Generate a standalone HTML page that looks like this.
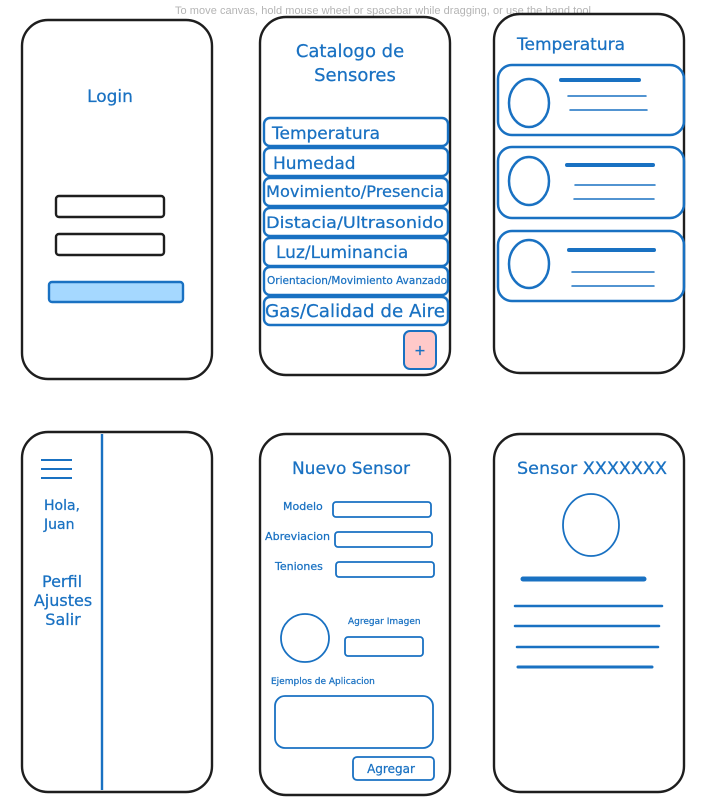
<!DOCTYPE html>
<html><head><meta charset="utf-8"><style>
html,body{margin:0;padding:0;background:#fff;width:714px;height:808px;overflow:hidden}
svg{display:block}
text{font-family:"DejaVu Sans","Liberation Sans",sans-serif;fill:#1971c2;stroke:#1971c2;stroke-width:0.25}
</style></head><body>
<svg width="714" height="808" viewBox="0 0 714 808" xmlns="http://www.w3.org/2000/svg">
<text x="383" y="14" text-anchor="middle" font-size="11" style="fill:#b4b4b4;stroke:none;font-family:'Liberation Sans',sans-serif" textLength="416">To move canvas, hold mouse wheel or spacebar while dragging, or use the hand tool</text>
<g fill="none" stroke="#1e1e1e" stroke-width="2.4">
<rect x="22" y="20" width="190" height="359" rx="26"/>
<rect x="260" y="17" width="190" height="358" rx="26"/>
<rect x="494" y="14" width="190" height="359" rx="26"/>
<rect x="22" y="432" width="190" height="360" rx="26"/>
<rect x="260" y="434" width="190" height="361" rx="26"/>
<rect x="494" y="434" width="190" height="358" rx="26"/>
<rect x="56" y="196" width="108" height="21" rx="3"/>
<rect x="56" y="234" width="108" height="21" rx="3"/>
</g>
<text x="110" y="102" text-anchor="middle" font-size="17">Login</text>
<rect x="49" y="282" width="134" height="20" rx="3" fill="#a5d8ff" stroke="#1971c2" stroke-width="2.4"/>
<text x="350" y="57" text-anchor="middle" font-size="18">Catalogo de</text>
<text x="355" y="81" text-anchor="middle" font-size="18">Sensores</text>
<g fill="none" stroke="#1971c2" stroke-width="2.4">
<rect x="264" y="118" width="184" height="28" rx="6"/>
<rect x="264" y="148" width="184" height="28" rx="6"/>
<rect x="264" y="178" width="184" height="28" rx="6"/>
<rect x="264" y="208" width="184" height="28" rx="6"/>
<rect x="264" y="238" width="184" height="28" rx="6"/>
<rect x="264" y="267" width="184" height="28" rx="6"/>
<rect x="264" y="297" width="184" height="28" rx="6"/>
</g>
<text x="272" y="139" font-size="17">Temperatura</text>
<text x="273" y="169" font-size="17">Humedad</text>
<text x="266" y="197" font-size="16" textLength="178" lengthAdjust="spacingAndGlyphs">Movimiento/Presencia</text>
<text x="266" y="228" font-size="16" textLength="178" lengthAdjust="spacingAndGlyphs">Distacia/Ultrasonido</text>
<text x="276" y="258" font-size="17">Luz/Luminancia</text>
<text x="267" y="284" font-size="11" textLength="180" lengthAdjust="spacingAndGlyphs">Orientacion/Movimiento Avanzado</text>
<text x="265" y="317" font-size="18" textLength="180" lengthAdjust="spacingAndGlyphs">Gas/Calidad de Aire</text>
<rect x="404" y="331" width="32" height="38" rx="6" fill="#ffc9c9" stroke="#1971c2" stroke-width="2"/>
<text x="420" y="355" text-anchor="middle" font-size="14">+</text>
<text x="517" y="50" font-size="17">Temperatura</text>
<g fill="none" stroke="#1971c2" stroke-width="2.5">
<rect x="498" y="65" width="186" height="70" rx="14"/>
<rect x="498" y="147" width="186" height="71" rx="14"/>
<rect x="498" y="231" width="186" height="70" rx="14"/>
<ellipse cx="529" cy="103" rx="20" ry="24"/>
<ellipse cx="529" cy="181" rx="20" ry="24"/>
<ellipse cx="529" cy="264" rx="20" ry="24"/>
</g>
<g stroke="#1971c2" stroke-linecap="round">
<line x1="561" y1="80" x2="639" y2="80" stroke-width="4"/>
<line x1="568" y1="96" x2="646" y2="96" stroke-width="1.5"/>
<line x1="570" y1="110" x2="647" y2="110" stroke-width="1.5"/>
<line x1="567" y1="165" x2="653" y2="165" stroke-width="4"/>
<line x1="575" y1="185" x2="655" y2="185" stroke-width="1.5"/>
<line x1="574" y1="199" x2="654" y2="199" stroke-width="1.5"/>
<line x1="569" y1="250" x2="654" y2="250" stroke-width="4"/>
<line x1="572" y1="272" x2="654" y2="272" stroke-width="1.5"/>
<line x1="572" y1="286" x2="654" y2="286" stroke-width="1.5"/>
</g>
<line x1="102" y1="434" x2="102" y2="790" stroke="#1971c2" stroke-width="2.4"/>
<g stroke="#1971c2" stroke-width="2">
<line x1="41" y1="460" x2="72" y2="460"/>
<line x1="41" y1="469" x2="72" y2="469"/>
<line x1="41" y1="478" x2="72" y2="478"/>
</g>
<text x="44" y="510" font-size="14">Hola,</text>
<text x="44" y="529" font-size="14">Juan</text>
<text x="62" y="587" text-anchor="middle" font-size="16">Perfil</text>
<text x="63" y="606" text-anchor="middle" font-size="16">Ajustes</text>
<text x="63" y="625" text-anchor="middle" font-size="16">Salir</text>
<text x="351" y="474" text-anchor="middle" font-size="17">Nuevo Sensor</text>
<text x="283" y="510" font-size="11">Modelo</text>
<text x="265" y="540" font-size="11" textLength="65" lengthAdjust="spacingAndGlyphs">Abreviacion</text>
<text x="275" y="570" font-size="11">Teniones</text>
<text x="348" y="624" font-size="9">Agregar Imagen</text>
<text x="271" y="684" font-size="9">Ejemplos de Aplicacion</text>
<g fill="none" stroke="#1971c2" stroke-width="1.8">
<rect x="333" y="502" width="98" height="15" rx="3"/>
<rect x="335" y="532" width="97" height="15" rx="3"/>
<rect x="336" y="562" width="98" height="15" rx="3"/>
<circle cx="305" cy="638" r="24"/>
<rect x="345" y="637" width="78" height="19" rx="3"/>
<rect x="275" y="696" width="158" height="52" rx="10"/>
<rect x="353" y="757" width="81" height="23" rx="4"/>
</g>
<text x="391" y="773" text-anchor="middle" font-size="12">Agregar</text>
<text x="517" y="474" font-size="17" textLength="150" lengthAdjust="spacingAndGlyphs">Sensor XXXXXXX</text>
<ellipse cx="591" cy="525" rx="28" ry="31" fill="none" stroke="#1971c2" stroke-width="1.8"/>
<g stroke="#1971c2" stroke-linecap="round">
<line x1="523" y1="579" x2="644" y2="579" stroke-width="5"/>
<line x1="515" y1="606" x2="662" y2="606" stroke-width="2.5"/>
<line x1="515" y1="626" x2="659" y2="626" stroke-width="2.5"/>
<line x1="517" y1="647" x2="658" y2="647" stroke-width="2.5"/>
<line x1="518" y1="667" x2="652" y2="667" stroke-width="3"/>
</g>
</svg>
</body></html>
